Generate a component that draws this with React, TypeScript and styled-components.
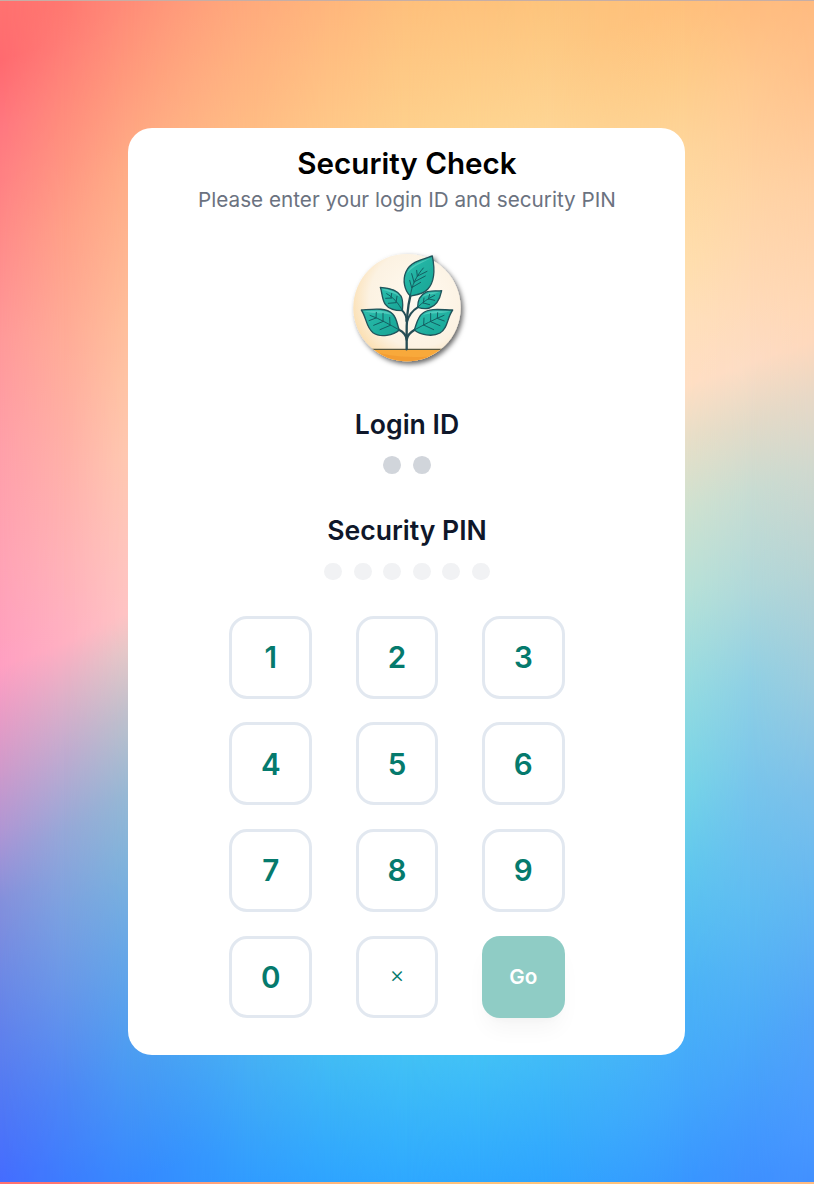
import React from "react";
import styled, { createGlobalStyle } from "styled-components";

const GlobalStyle = createGlobalStyle`
  *, *::before, *::after { box-sizing: border-box; }
  body {
    margin: 0;
    font-family: Inter, "Liberation Sans", sans-serif;
    -webkit-font-smoothing: antialiased;
  }
`;

type Stop = [string, number];
type BandData = { x: number; tilt?: number; stops: Stop[] };

/* Slanted colour ramps, cross-faded from left to right; stop positions are
   heights along the vertical line at x. */
const bands: BandData[] = [
  { x: 0, tilt: 20, stops: [["#ff7270", 0], ["#ff6a70", 60], ["#ff7880", 128], ["#ff8a88", 227], ["#ff9a9a", 340], ["#ffa0aa", 453], ["#ffa3b6", 566], ["#ffa0c2", 665], ["#e89cc6", 717], ["#cf9acb", 770], ["#b096d4", 830], ["#8590dc", 899], ["#6c88e6", 982], ["#5279f4", 1095], ["#446cff", 1182]] },
  { x: 64, tilt: 20, stops: [["#ff7870", 0], ["#ff7e76", 45], ["#ff8c7c", 113], ["#ffa088", 227], ["#ffac98", 340], ["#ffb0a8", 453], ["#ffb2b8", 566], ["#ffb0c2", 642], ["#dfb0c8", 695], ["#bfabd0", 755], ["#96a8d8", 830], ["#7ca2e0", 906], ["#6a98e8", 982], ["#4c86f6", 1095], ["#3c7cff", 1182]] },
  { x: 128, tilt: 20, stops: [["#ff8c78", 0], ["#ff9a7c", 75], ["#ffac86", 166], ["#ffbc98", 302], ["#ffc4a4", 378], ["#ffc8b0", 453], ["#ffc6ba", 529], ["#ffc4c4", 612], ["#e4c8c8", 650], ["#bcc0cc", 717], ["#96b8d4", 793], ["#82b4da", 853], ["#68a8e6", 944], ["#4c9cf2", 1057], ["#3688ff", 1182]] },
  { x: 250, stops: [["#ffaa7c", 0], ["#ffbc84", 128], ["#46b0f4", 1055], ["#309cff", 1182]] },
  { x: 330, stops: [["#ffb67c", 0], ["#ffc888", 128], ["#42bcf4", 1055], ["#2ea4ff", 1182]] },
  { x: 407, stops: [["#fec07c", 0], ["#fed08c", 128], ["#42c1f5", 1055], ["#2ea8ff", 1182]] },
  { x: 480, stops: [["#fec27c", 0], ["#fed490", 128], ["#42c1f6", 1055], ["#2ea7ff", 1182]] },
  { x: 550, stops: [["#fdc47c", 0], ["#fed594", 128], ["#42bbf7", 1055], ["#2ea4ff", 1182]] },
  { x: 685, tilt: 20, stops: [["#ffc07c", 0], ["#fecc8a", 75], ["#fed69c", 151], ["#ffdfae", 264], ["#ffe0bc", 325], ["#ffdfc4", 385], ["#e8dfc8", 438], ["#d0e2d0", 506], ["#b8e2d8", 589], ["#98dce0", 680], ["#74d4e8", 793], ["#60c8ee", 868], ["#4cb4f6", 982], ["#42a6fc", 1095], ["#3896ff", 1182]] },
  { x: 750, tilt: 20, stops: [["#ffbc7e", 0], ["#ffc88e", 75], ["#ffd4a4", 189], ["#ffdab8", 302], ["#fddcc4", 362], ["#e2dac8", 423], ["#c8dcd2", 491], ["#b0d8da", 589], ["#90d0e4", 680], ["#76c4ec", 793], ["#5ebcf2", 906], ["#4cacf8", 1019], ["#4298fe", 1133], ["#3e90ff", 1182]] },
  { x: 813, tilt: 20, stops: [["#ffba80", 0], ["#ffc28c", 75], ["#ffd0a4", 189], ["#ffd8b6", 302], ["#fed8bc", 340], ["#e8d8c6", 393], ["#d0d8ce", 468], ["#b8d4d4", 566], ["#9cccde", 680], ["#7cc0ea", 793], ["#62b6f2", 906], ["#52a4f8", 1019], ["#4898ff", 1133], ["#4290ff", 1182]] },
];

const ramp = ({ x, tilt = 0, stops }: BandData) => {
  const rad = (tilt * Math.PI) / 180;
  const list = stops.map(
    ([color, y]) => `${color} ${(x * Math.sin(rad) + y * Math.cos(rad)).toFixed(1)}px`
  );
  return `linear-gradient(${180 - tilt}deg, ${list.join(", ")})`;
};

const Screen = styled.div`
  display: grid;
  width: 814px;
  height: 1184px;
  overflow: hidden;
  border-top: 1px solid #c6aea6;
`;

const Band = styled.div<{ $from: number; $data: BandData }>`
  grid-area: 1 / 1;
  background: ${(p) => ramp(p.$data)};
  background-size: 100% 1181px;
  background-repeat: repeat-y;
  ${(p) => p.$data.x > 0 && `mask-image: linear-gradient(90deg, transparent ${p.$from}px, #000 ${p.$data.x}px);`}
`;

const Card = styled.main`
  grid-area: 1 / 1;
  z-index: 1;
  width: 557px;
  height: 927px;
  margin: 127px 0 0 128px;
  padding: 17px 0 0 1px;
  background: #fff;
  border-radius: 24px;
  display: flex;
  flex-direction: column;
  align-items: center;
`;

const Title = styled.h1`
  margin: 0;
  font-size: 29.6px;
  line-height: 37px;
  font-weight: 600;
  color: #000;
`;

const Subtitle = styled.p`
  margin: 3px 0 0;
  font-size: 20.7px;
  line-height: 30px;
  color: #6b7280;
`;

const Logo = styled.svg`
  display: block;
  width: 140px;
  height: 140px;
  margin: 25px 0 0 6px;
`;

const Field = styled.section`
  display: flex;
  flex-direction: column;
  align-items: center;
  height: 106.5px;
`;

const Label = styled.h2`
  margin: 0;
  font-size: 26.6px;
  line-height: 40px;
  font-weight: 600;
  color: #0f172a;
`;

const Dots = styled.div`
  display: flex;
  gap: 11.8px;
  margin-top: 12.3px;
`;

const Dot = styled.span<{ $color: string }>`
  width: 17.8px;
  height: 17.8px;
  border-radius: 50%;
  background: ${(p) => p.$color};
`;

const Fields = styled.div`
  padding-top: 23.8px;
`;

const Keypad = styled.div`
  display: grid;
  grid-template-columns: repeat(3, 82.7px);
  grid-auto-rows: 82.7px;
  gap: 23.9px 43.6px;
  align-self: flex-start;
  margin: -0.9px 0 0 100.4px;
`;

const Key = styled.button`
  display: flex;
  align-items: center;
  justify-content: center;
  padding: 0;
  border: 3px solid #e2e8f0;
  border-radius: 18px;
  background: #fff;
  color: #057a6d;
  font-family: inherit;
  font-size: 29.6px;
  font-weight: 600;
`;

const ClearKey = styled(Key)`
  padding-bottom: 3px;
  font-size: 23px;
  font-weight: 300;
`;

const GoKey = styled(Key)`
  border: 0;
  background: #8fccc5;
  color: #fff;
  font-size: 20.7px;
  box-shadow: 0 15px 22px -4px rgba(0, 0, 0, 0.04), 0 6px 9px -6px rgba(0, 0, 0, 0.04);
`;

const leaves = [
  { body: "M277 48C285 88 284 126 263 148C248 164 228 165 211 168C193 151 187 120 198 95C211 66 244 59 277 48Z", shine: "M271 55C236 67 210 77 201 101C218 79 240 72 271 55Z", veins: "M211 168C215 135 230 107 250 84M215 143L209 121M222 126L215 101M232 109L230 91M215 143L242 127M222 126L256 108M233 108L261 94" },
  { body: "M121 142C148 144 172 149 183 168C191 183 188 200 187 212C167 212 147 208 136 193C125 178 127 158 121 142Z", shine: "M126 147C151 149 172 155 180 171C166 159 146 157 126 147Z", veins: "M187 212C177 190 158 171 140 161M153 174L155 160M168 188L171 169M168 188L145 190M155 174L137 175" },
  { body: "M305 152C300 176 289 198 268 204C255 208 243 205 233 202C233 183 241 165 257 157C272 150 289 154 305 152Z", shine: "M299 156C277 157 256 158 245 172C263 162 283 164 299 156Z", veins: "M233 202C248 186 264 176 284 166M250 189L252 174M265 178L269 163M250 189L269 194M267 177L284 181" },
  { body: "M64 210C96 208 137 201 158 222C172 236 171 256 178 270C161 286 121 294 99 278C78 262 79 231 64 210Z", shine: "M70 213C104 214 141 206 156 225C133 217 102 223 70 213Z", veins: "M178 270C151 255 119 236 90 226M108 234L109 217M129 244L129 220M150 256L149 232M108 234L87 242M130 244L101 256M151 256L120 269" },
  { body: "M338 210C320 235 325 264 300 279C276 292 240 284 223 270C230 251 232 231 249 219C270 203 307 210 338 210Z", shine: "M331 214C299 213 265 209 247 226C274 217 301 223 331 214Z", veins: "M223 270C250 255 280 239 312 226M251 255L252 234M272 244L272 220M292 235L293 218M251 255L281 269M272 245L300 257M291 235L313 243" },
];

const PlantLogo = () => (
  <Logo viewBox="0 0 420 420" role="img" aria-label="Plant">
    <defs>
      <radialGradient id="cream" gradientUnits="userSpaceOnUse" cx="235" cy="175" r="225">
        <stop offset="0" stopColor="#fffaf1" />
        <stop offset="0.65" stopColor="#fcf2e2" />
        <stop offset="1" stopColor="#fbdaa4" />
      </radialGradient>
      <linearGradient id="leaf" x1="0" y1="0" x2="1" y2="1">
        <stop offset="0" stopColor="#2dbfae" />
        <stop offset="1" stopColor="#16a394" />
      </linearGradient>
      <clipPath id="disc"><circle cx="201" cy="203" r="161" /></clipPath>
      <filter id="shadow" x="-15%" y="-15%" width="135%" height="135%">
        <feDropShadow dx="7" dy="8" stdDeviation="8" floodColor="#000" floodOpacity="0.6" />
      </filter>
    </defs>
    <g filter="url(#shadow)">
      <g clipPath="url(#disc)">
        <rect width="420" height="420" fill="url(#cream)" />
        <rect y="328" width="420" height="92" fill="#f8a93b" />
        <path d="M80 328Q160 357 260 350T322 334V420H80Z" fill="#f19a32" opacity="0.75" />
        <path d="M80 328H325" stroke="#555641" strokeWidth="4" />
      </g>
      <g fill="none" stroke="#254d55" strokeLinecap="round">
        <path d="M200 328C201 286 195 230 211 168" strokeWidth="7" />
        <path d="M199 243C200 228 194 219 187 212M201 245C207 225 218 211 233 202" strokeWidth="6" />
        <path d="M200 299C200 287 189 275 178 270M200 299C202 286 211 277 223 270" strokeWidth="7" />
      </g>
      {leaves.map((l) => (
        <g key={l.body} strokeLinecap="round" strokeLinejoin="round">
          <path d={l.body} fill="url(#leaf)" stroke="#20535a" strokeWidth="4" />
          <path d={l.shine} fill="#64d4c6" opacity="0.65" />
          <path d={l.veins} fill="none" stroke="#125f62" strokeWidth="3" />
        </g>
      ))}
    </g>
  </Logo>
);

export default function App() {
  return (
    <>
      <GlobalStyle />
      <Screen>
        {bands.map((b, i) => (
          <Band key={b.x} $from={i ? bands[i - 1].x : 0} $data={b} />
        ))}
        <Card>
          <Title>Security Check</Title>
          <Subtitle>Please enter your login ID and security PIN</Subtitle>
          <PlantLogo />
          <Fields>
            <Field>
              <Label>Login ID</Label>
              <Dots>
                {[0, 1].map((n) => <Dot key={n} $color="#d1d5db" />)}
              </Dots>
            </Field>
            <Field>
              <Label>Security PIN</Label>
              <Dots>
                {[0, 1, 2, 3, 4, 5].map((n) => <Dot key={n} $color="#f1f2f4" />)}
              </Dots>
            </Field>
          </Fields>
          <Keypad>
            {["1", "2", "3", "4", "5", "6", "7", "8", "9", "0"].map((n) => <Key key={n}>{n}</Key>)}
            <ClearKey aria-label="Clear">×</ClearKey>
            <GoKey>Go</GoKey>
          </Keypad>
        </Card>
      </Screen>
    </>
  );
}
